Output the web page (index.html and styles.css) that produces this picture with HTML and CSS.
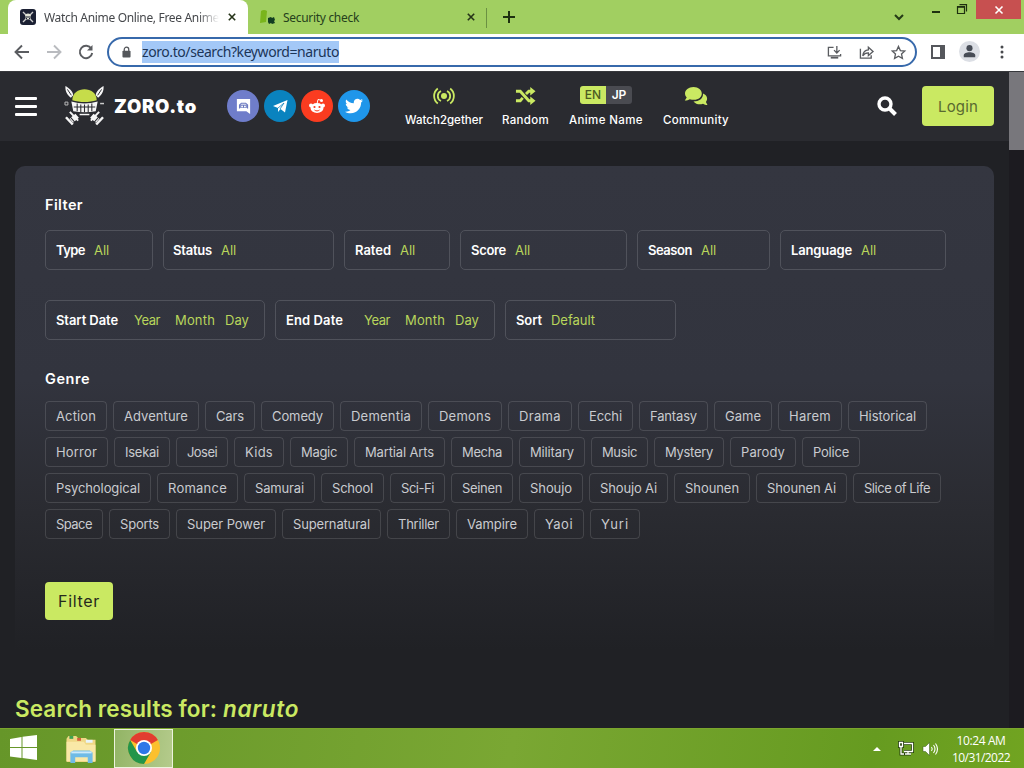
FILE: index.html
```
<!DOCTYPE html>
<html lang="en">
<head>
    <meta charset="UTF-8">
    <meta name="viewport" content="width=device-width, initial-scale=1.0">
    <title>Watch Anime Online, Free Anime</title>
    <link rel="stylesheet" href="styles.css">
</head>
<body>
    <!-- Browser tabs -->
    <div class="tabbar">
        <div class="tab tab-active">
            <svg class="favicon" viewBox="0 0 16 16"><rect width="16" height="16" rx="3" fill="#1b2033"/><path d="M3 3l10 10M13 3L3 13" stroke="#ccc" stroke-width="1.4"/><circle cx="8" cy="7.5" r="3" fill="#e3e6d8"/><path d="M5 8h6M6.5 10v-1M9.5 10v-1" stroke="#1b2033"/></svg>
            <span class="tab-title" data-w="175">Watch Anime Online, Free Anime</span>
            <svg class="tab-close" viewBox="0 0 10 10"><path d="M1 1l8 8M9 1L1 9"/></svg>
        </div>
        <div class="tab">
            <svg class="favicon" viewBox="0 0 16 16"><path d="M1 2q3-2 6 0L6 13l-6 1z" fill="#79b51c"/><path d="M8 9l3-1 1 1 2-1 1 3-1 1 1 2-3 1-1-1-2 1-1-2z" fill="#123d22"/></svg>
            <span class="tab-title" data-w="76">Security check</span>
            <svg class="tab-close" viewBox="0 0 10 10"><path d="M1 1l8 8M9 1L1 9"/></svg>
        </div>
        <span class="tab-sep"></span>
        <svg class="new-tab" viewBox="0 0 12 12"><path d="M6 0v12M0 6h12"/></svg>
        <svg class="tab-search" viewBox="0 0 10 6"><path d="M1 1l4 4 4-4"/></svg>
        <div class="window-buttons">
            <svg class="win-min" viewBox="0 0 8 2"><path d="M0 1h8" stroke="#1e3010" stroke-width="2"/></svg>
            <svg class="win-max" viewBox="0 0 10 10"><path d="M.5 2.8h7v6.7h-7zM2.5 .6h7v6.900" fill="none" stroke="#1e3010" stroke-width="1.2"/><path d="M0 2.8h8" stroke="#1e3010" stroke-width="1.6"/></svg>
            <div class="win-close"><svg viewBox="0 0 8 8"><path d="M.5.5l7 7M7.5.5l-7 7" stroke="#fff" stroke-width="1.6"/></svg></div>
        </div>
    </div>

    <!-- Address bar -->
    <div class="toolbar">
        <svg class="nav-icon" viewBox="0 0 16 16"><path d="M15 8H2M8 1.5L1.5 8 8 14.5"/></svg>
        <svg class="nav-icon nav-off" viewBox="0 0 16 16"><path d="M1 8h13M8 1.5L14.5 8 8 14.5"/></svg>
        <svg class="nav-icon" viewBox="0 0 16 16"><path d="M13.3 4.600A6.200 6.200 0 1 0 14.200 9"/><path d="M14.5 1v5.500H9z" fill="#5a5c60" stroke="none"/></svg>
        <div class="omnibox">
            <svg class="lock" viewBox="0 0 10 12"><path d="M2.5 5V3.200a2.500 2.500 0 0 1 5 0V5" fill="none" stroke="#54565a" stroke-width="1.4"/><rect x=".5" y="4.500" width="9" height="7.500" rx="1" fill="#54565a"/></svg>
            <span class="url"><span data-w="197">zoro.to/search?keyword=naruto</span></span>
            <svg class="omni-icon" viewBox="0 0 16 16"><path d="M7 2.500H1.500v9H14.500V9.500M10.500 1v7M7.500 5.500l3 3 3-3"/><path d="M4 13.500h8" stroke-width="2"/></svg>
            <svg class="omni-icon" viewBox="0 0 16 16"><path d="M1.500 4v10h11.500v-3M4 11.500c.5-4 2.500-6 6-6.200V2.500L15 7l-5 4.300V8.500C7.500 8.400 5.500 9.300 4 11.500z"/></svg>
            <svg class="omni-icon" viewBox="0 0 16 16"><path d="M8 1.500l2 4.400 4.700.5-3.500 3.200 1 4.700L8 11.900l-4.200 2.400 1-4.700L1.300 6.400l4.700-.5z"/></svg>
        </div>
        <svg class="side-panel" viewBox="0 0 14 14"><rect x="1" y="1" width="12" height="12" fill="none" stroke="#55575c" stroke-width="2"/><path d="M9 1h4v12H9z" fill="#55575c"/></svg>
        <svg class="avatar" viewBox="0 0 22 22"><circle cx="11" cy="11" r="11" fill="#dcdfe5"/><circle cx="11" cy="7.500" r="3.200" fill="#474c56"/><path d="M5 17v-2c0-2 3-3.200 6-3.200s6 1.200 6 3.200v2z" fill="#474c56"/></svg>
        <svg class="dots" viewBox="0 0 4 14"><circle cx="2" cy="2" r="1.500"/><circle cx="2" cy="7" r="1.500"/><circle cx="2" cy="12" r="1.500"/></svg>
    </div>

    <div class="viewport">
        <div class="page">
            <header class="header">
                <div class="burger"><i></i><i></i><i></i></div>
                <svg class="logo-skull" viewBox="0 0 42 42">
                    <!-- blades -->
                    <path d="M1.500 1C5 3 9 6 9.500 10.500L7 13C3 10 1 6 1.500 1zM40.500 1C37 3 33 6 32.500 10.500L35 13c4-3 6-7 5.500-12z" fill="#f6f6f6"/>
                    <path d="M3.500 4.500l4 6M38.500 4.500l-4 6" stroke="#2b2c31" stroke-width="1"/>
                    <!-- hilts -->
                    <path d="M13.500 31.500l-6 5M28.500 31.500l6 5" stroke="#f6f6f6" stroke-width="5.500"/>
                    <path d="M6 27.500l8.500 9M36 27.500l-8.500 9" stroke="#f6f6f6" stroke-width="2"/>
                    <path d="M2 33l7 7.500M40 33l-7 7.500" stroke="#f6f6f6" stroke-width="2.500"/>
                    <path d="M6 32.500l5 5.500M36 32.500l-5 5.500" stroke="#2b2c31" stroke-width="1.100"/>
                    <path d="M1 17.500h3v3H1z" fill="none" stroke="#bbb" stroke-width="1"/><path d="M37 19h4" stroke="#ccc" stroke-width="1.500"/>
                    <!-- teeth -->
                    <path d="M7.500 17q13.500 4 27 0l-2 10q-11.500 2-23 0z" fill="#f6f6f6"/>
                    <path d="M10 22.500h22M13.500 19v8M17.200 20v8M21 20v8M24.800 20v8M28.500 19v8" stroke="#2b2c31" stroke-width="1.100"/>
                    <path d="M16 29.500h10v1.500H16z" fill="#f6f6f6"/>
                    <path d="M8.500 15.500C8.500 .5 33.500 .5 33.500 15.500c-8 2.500-17 2.500-25 0z" fill="#c6dc4a"/>
                </svg>
                <span class="logo-text"><span data-w="83">ZORO.to</span></span>
                <div class="socials">
                    <a class="social discord"><svg viewBox="0 0 18 18"><path d="M2 1h14v16l-4-3H2z" fill="#fff"/><path d="M4.800 11V7.500L6.800 5.500h4.500l2 2V11" fill="none" stroke="#6b79c0" stroke-width="1.2"/><path d="M5.500 7h7v3.500h-7z" fill="#6b79c0"/><circle cx="7.500" cy="9" r="1" fill="#fff"/><circle cx="10.500" cy="9" r="1" fill="#fff"/></svg></a>
                    <a class="social telegram"><svg viewBox="0 0 18 18"><path d="M2 9L16.500 3 14 15.500 9.500 12 7 15v-4z" fill="#fff"/><path d="M7 11l6-5-4 6" fill="none" stroke="#0c83bb" stroke-width=".8"/></svg></a>
                    <a class="social reddit"><svg viewBox="0 0 18 18"><path d="M9 7l1-4.500 3 .7" fill="none" stroke="#fff"/><circle cx="13.500" cy="3.500" r="1.500" fill="#fff"/><circle cx="3" cy="8.500" r="2" fill="#fff"/><circle cx="15" cy="8.500" r="2" fill="#fff"/><ellipse cx="9" cy="11" rx="6.500" ry="5" fill="#fff"/><circle cx="6.500" cy="10" r="1.100" fill="#f83d20"/><circle cx="11.500" cy="10" r="1.100" fill="#f83d20"/><path d="M6.500 13c1.500 1.200 3.500 1.200 5 0" fill="none" stroke="#f83d20"/></svg></a>
                    <a class="social twitter"><svg viewBox="0 0 512 512"><path fill="#fff" d="M459 152c.3 4 .3 9 .3 13.600C459.300 304 354 464 161 464c-59 0-114-17-161-47 8 1 16 1.300 25 1.300 49 0 94-17 130-45-46-1-85-31-98-73 7 1 13 1.600 20 1.600 9 0 19-1.300 28-3.600-48-10-84-52-84-103v-1c14 8 30 13 47 13.600-28-19-47-51-47-87 0-19 5-37 14-53 52 64 130 106 217 110-2-8-3-16-3-24 0-58 47-105 105-105 30 0 57 13 77 33 24-5 46-13 66-25-8 24-24 45-46 58 21-2 42-8 60-16-14 21-32 39-52 54z"/></svg></a>
                </div>
                <nav class="menu">
                    <a class="menu-item w2g"><svg viewBox="0 0 20 18"><circle cx="10" cy="9" r="3" fill="#cae962"/><path d="M7 4a5.500 5.500 0 0 0 0 10M13 4a5.500 5.500 0 0 1 0 10M3.800 1.500a9.500 9.500 0 0 0 0 15M16.200 1.500a9.500 9.500 0 0 1 0 15" fill="none" stroke="#cae962" stroke-width="1.8"/></svg><span data-w="78">Watch2gether</span></a>
                    <a class="menu-item random"><svg viewBox="0 0 22 18"><path d="M1 4h4.500l9 10H17M1 14h4.500l2.600-3M11.500 7l3-3H17" fill="none" stroke="#cae962" stroke-width="3"/><path d="M16 -.5l5.500 4.500-5.500 4.500zM16 9.500l5.500 4.500-5.500 4.500z" fill="#cae962"/></svg><span data-w="47">Random</span></a>
                    <a class="menu-item name"><div class="lang"><b class="en">EN</b><b class="jp">JP</b></div><span data-w="74">Anime Name</span></a>
                    <a class="menu-item community"><svg viewBox="0 0 24 20"><path d="M9.500 1C4.500 1 1 4 1 7.500c0 1.500.7 2.900 1.700 4L.8 14.500c2 0 3.800-.5 5-1.300 7 2 12-1.200 12-5.700C17.800 4 14.500 1 9.500 1z" fill="#cae962"/><path d="M19 7.500c.4 5-4 8-9.500 8 2.500 3 6.500 3.300 9.500 2.200 1.200.8 2.800 1.300 4.500 1.300l-1.600-3c2.500-3 1.100-7-2.900-8.500z" fill="#cae962"/></svg><span data-w="66">Community</span></a>
                </nav>
                <svg class="search" viewBox="0 0 20 20"><circle cx="8" cy="8" r="6" fill="none" stroke="#fff" stroke-width="3.400"/><path d="M12.500 12.500l6 6" stroke="#fff" stroke-width="4"/></svg>
                <a class="login"><span data-w="40">Login</span></a>
            </header>

            <section class="filter">
                <h2><span data-w="38">Filter</span></h2>
                <div class="fields">
                    <div class="field f-type"><b data-w="29">Type</b><em>All</em></div>
                    <div class="field f-status"><b data-w="39">Status</b><em>All</em></div>
                    <div class="field f-rated"><b data-w="36">Rated</b><em>All</em></div>
                    <div class="field f-score"><b data-w="35">Score</b><em>All</em></div>
                    <div class="field f-season"><b data-w="44">Season</b><em>All</em></div>
                    <div class="field f-language"><b data-w="61">Language</b><em>All</em></div>
                </div>
                <div class="fields">
                    <div class="field f-date"><b data-w="62">Start Date</b><em class="year" data-w="26">Year</em><em class="month" data-w="40">Month</em><em data-w="24">Day</em></div>
                    <div class="field f-date"><b data-w="57">End Date</b><em class="year year-end" data-w="26">Year</em><em class="month" data-w="40">Month</em><em data-w="24">Day</em></div>
                    <div class="field f-sort"><b data-w="26">Sort</b><em data-w="44">Default</em></div>
                </div>
                <h2 class="genre-title"><span data-w="45">Genre</span></h2>
                <div id="genres" class="genres"></div>
                <a class="apply"><span data-w="42">Filter</span></a>
            </section>

            <h1><span data-w="202">Search results for:</span><i data-w="76">naruto</i></h1>
        </div>
        <div class="scrollbar"><div class="thumb"></div></div>
    </div>

    <!-- Taskbar -->
    <div class="taskbar">
        <svg class="start" viewBox="0 0 27 25"><path d="M0 4l11.500-2v10H0zM12.500 1.800L27 0v12H12.500zM0 13h11.500v10L0 21.500zM12.500 13H27v12l-14.500-2z" fill="#fff"/></svg>
        <svg class="explorer" viewBox="0 0 32 30">
            <path d="M1 4l2-3h8l2 2h8l2 2h8v23H1z" fill="#efd886"/><path d="M4 1h4v3H4z" fill="#3fa251"/><path d="M12 3h4v3h-4z" fill="#d5613f"/><path d="M21 5h7v3h-7z" fill="#e8f4fa"/>
            <path d="M1 7h18l2 3h10v17H1z" fill="#f9e8a7"/><path d="M5 29V18l3-2h17l3 2v11h-5v-6H10v6z" fill="#6fbbe6"/><path d="M6 18h21" stroke="#cdeafa" stroke-width="2"/>
        </svg>
        <div class="task-active">
            <svg class="chrome" viewBox="0 0 32 32"><circle cx="16" cy="16" r="16" fill="#fbc02e"/><path d="M16 16L2.140 8A16 16 0 0 1 29.860 8z" fill="#e23d30"/><path d="M2.140 8A16 16 0 0 0 16 32l6.930-12L16 16l-6.930 4z" fill="#23954a"/><circle cx="16" cy="16" r="8" fill="#fff"/><circle cx="16" cy="16" r="6.200" fill="#2e77e8"/></svg>
        </div>
        <div class="tray">
            <svg class="tray-up" viewBox="0 0 8 4"><path d="M4 0l4 4H0z" fill="#fff"/></svg>
            <svg class="network" viewBox="0 0 16 15"><g fill="none" stroke="#24400a" stroke-width="3"><path d="M5 2.500h9.500v8H6M1.500 1.500h3v4h-3zM3 6v7h10"/></g><g fill="none" stroke="#fff" stroke-width="1.3"><path d="M6 2.500h8.500v8H6M1.500 1.500h3v4h-3zM3 6v7h3M7 13h6M10 11v2"/></g></svg>
            <svg class="sound" viewBox="0 0 16 14"><path d="M1 4.500h2.500L7.500 .5v13l-4-4H1z" fill="#fff" stroke="#35551a" stroke-width=".5"/><path d="M9.500 5q1.500 2 0 4M11.500 3q3 4 0 8M13.500 1.500q4 5.500 0 11" fill="none" stroke="#fff" stroke-width="1.1"/></svg>
            <div class="clock"><span data-w="49">10:24 AM</span><span data-w="58">10/31/2022</span></div>
        </div>
    </div>

    <script src="script.js"></script>
</body>
</html>
```
FILE: styles.css
```
body {
    margin: 0;
    width: 1024px;
    height: 768px;
    overflow: hidden;
    background: #202125;
    color: #fff;
    font-family: Inter, "Open Sans", sans-serif;
    font-size: 13px;
    display: flex;
    flex-direction: column;
}
* { box-sizing: border-box; }
svg { display: block; flex: none; overflow: visible; }
[data-w] { display: inline-block; white-space: nowrap; }

/* Tabs */
.tabbar {
    height: 34px;
    flex: none;
    display: flex;
    background: #a1cf61;
    color: #25401c;
    font-family: "Noto Sans", sans-serif;
    font-size: 12px;
}
.tab {
    height: 34px;
    width: 238px;
    padding: 0 11px 0 12px;
    display: flex;
    align-items: center;
}
.tab-active {
    width: 240px;
    margin-left: 8px;
    background: #fff;
    border-radius: 8px 8px 0 0;
    color: #45474b;
}
.tab-active .tab-title {
    -webkit-mask-image: linear-gradient(90deg, #000 88%, transparent);
    mask-image: linear-gradient(90deg, #000 88%, transparent);
}
.favicon { width: 16px; height: 16px; margin-right: 8px; }
.tab:not(.tab-active) .favicon { margin-right: 7px; }
.tab-close { width: 8px; height: 8px; margin-left: auto; fill: none; stroke: #253318; stroke-width: 2; }
.tab-active .tab-close { margin-right: 1px; }
.tab-sep { width: 1px; height: 20px; margin-top: 8px; background: #6b9142; }
.new-tab { width: 12px; height: 12px; margin: 11px 0 0 16px; stroke: #1e3010; stroke-width: 2; }
.tab-search { width: 10px; height: 6px; margin: 14px 0 0 379px; fill: none; stroke: #253b17; stroke-width: 2; }
.window-buttons { display: flex; margin-left: auto; padding-right: 3px; }
.win-min { width: 8px; height: 2px; margin: 11px 17px 0 0; }
.win-max { width: 10px; height: 10px; margin: 4px 9px 0 0; }
.win-close { width: 45px; height: 19px; background: #c75050; display: flex; align-items: center; justify-content: center; }
.win-close svg { width: 8px; height: 8px; }

/* Address bar */
.toolbar {
    height: 37px;
    flex: none;
    background: #fff;
    display: flex;
    align-items: center;
    padding: 0 20px 2px 14px;
}
.nav-icon { width: 16px; height: 16px; margin-right: 16px; fill: none; stroke: #5a5c60; stroke-width: 1.9; }
.nav-icon.nav-off { stroke: #b9bbbf; }
.nav-icon:nth-child(3) { margin-right: 13px; }
.omnibox {
    width: 810px;
    height: 30px;
    margin-top: 1px;
    border: 2px solid #3769ab;
    border-radius: 15px;
    display: flex;
    align-items: center;
    padding: 0 9px 0 13px;
}
.lock { width: 9px; height: 12px; margin-right: 11px; }
.url {
    height: 22px;
    line-height: 22px;
    background: #a3c8f7;
    color: #1c3558;
    font-family: "Noto Sans", sans-serif;
    font-size: 14px;
    margin-right: auto;
}
.omni-icon { width: 15px; height: 15px; margin-left: 17px; fill: none; stroke: #5a5c60; stroke-width: 1.4; }
.side-panel { width: 14px; height: 14px; margin-left: 14px; }
.avatar { width: 21px; height: 21px; margin-left: 14px; }
.dots { width: 4px; height: 14px; margin-left: auto; fill: #47494d; }

/* Site */
.viewport { height: 657px; flex: none; display: flex; border-top: 1px solid #37383c; }
.page { width: 1009px; }
.scrollbar { width: 15px; background: #1c1b20; }
.thumb { height: 78px; background: #78777c; }

.header {
    height: 69px;
    background: #2a2b30;
    display: flex;
    padding: 0 15px;
}
.burger { width: 22px; margin-top: 25px; display: flex; flex-direction: column; gap: 4px; }
.burger i { height: 3px; background: #fff; border-radius: 1px; }
.burger i + i { margin-top: 1px; }
.logo-skull { width: 41px; height: 41px; margin: 13px 0 0 27px; }
.logo-text { font-size: 18.500px; font-weight: 900; line-height: 24px; margin: 22px 0 0 9px; width: 85px; }
.socials { display: flex; gap: 5px; margin: 18px 0 0 28px; }
.social { width: 32px; height: 32px; border-radius: 50%; display: flex; align-items: center; justify-content: center; }
.social svg { width: 18px; height: 18px; }
.social.discord svg { width: 17px; height: 17px; }
.discord { background: #6f7dca; }
.telegram { background: #0a83bf; }
.reddit { background: #fa3c20; }
.twitter { background: #1f96ea; }
.menu { display: flex; gap: 20px; margin-left: 35px; font-size: 11.500px; font-weight: 500; }
.menu-item { height: 60px; display: flex; flex-direction: column; align-items: center; padding-top: 14px; }
.menu-item + .menu-item { position: relative; left: -1px; }
.menu-item > span { line-height: 16px; margin-top: auto; margin-bottom: 4px; }
.w2g svg { width: 20px; height: 18px; margin-top: 1px; }
.random svg { width: 21px; height: 18px; margin-top: 1px; }
.community svg { width: 24px; height: 20px; }
.lang { display: flex; width: 52px; height: 18px; border-radius: 3px; overflow: hidden; line-height: 18px; font-size: 12px; text-align: center; }
.lang b { width: 26px; font-weight: 600; }
.lang .en { background: #cae962; color: #4c5a22; font-weight: 500; }
.jp { background: #4a4b51; }
.search { width: 20px; height: 20px; margin: 24px 25px 0 auto; }
.login { width: 72px; height: 40px; margin-top: 14px; border-radius: 4px; background: #cae962; color: #596930; font-size: 15px; line-height: 42px; text-align: center; }

/* Filter box */
.filter {
    width: 979px;
    height: 510px;
    margin: 25px 0 0 15px;
    padding: 29px 30px 0;
    border-radius: 10px;
    background: linear-gradient(#343640, #32343e 42%, #2a2b31 68%, #202125 95%);
}
h2 { margin: 0; font-size: 14.500px; line-height: 20px; font-weight: 600; }
.fields { display: flex; gap: 10px; margin-top: 15px; }
.fields + .fields { margin-top: 30px; }
.field { height: 40px; border: 1px solid #50525b; border-radius: 5px; padding: 0 10px; display: flex; align-items: center; line-height: 38px; font-size: 13px; }
.field b { font-weight: 600; margin-right: 9px; }
.field em { font-style: normal; font-weight: 400; color: #b9d65b; }
.f-type { width: 108px; }
.f-status { width: 171px; padding-left: 9px; }
.f-rated { width: 106px; }
.f-score { width: 167px; }
.f-season { width: 133px; }
.f-language { width: 166px; }
.f-date { width: 220px; }
.f-sort { width: 171px; }
.field .year { margin: 0 15px 0 7px; }
.field .year-end { margin-left: 12px; }
.field .month { margin-right: 10px; }
.genre-title { margin-top: 29px; }
.genres { display: flex; flex-direction: column; gap: 6px; margin-top: 12px; }
.genre-row { display: flex; gap: 6px; }
.genre { height: 30px; line-height: 28px; padding: 0 10px; border: 1px solid rgba(255,255,255,0.13); border-radius: 4px; color: #c9cbcf; font-size: 13px; }
.apply { display: block; width: 68px; height: 38px; margin-top: 43px; border-radius: 4px; background: #cae962; color: #26291d; font-size: 16px; line-height: 38px; text-align: center; }

h1 { margin: 17px 0 0 15px; font-size: 22.500px; line-height: 32px; font-weight: 600; color: #cae962; display: flex; }
h1 i { margin-left: 6px; }

/* Taskbar */
.taskbar { height: 40px; flex: none; display: flex; background: linear-gradient(100deg, #669629, #7aa733 50%, #669b20 85%, #71a421); border-top: 1px solid #7ba52d; }
.start { width: 27px; height: 25px; margin: 6px 0 0 10px; }
.explorer { width: 32px; height: 29px; margin: 6px 0 0 28px; }
.task-active { width: 59px; height: 39px; margin-left: 17px; border: 1px solid #edf3de; background: linear-gradient(100deg, #92b465, #b5cb8c); display: flex; justify-content: center; padding-top: 2px; }
.chrome { width: 32px; height: 32px; }
.tray { margin-left: auto; display: flex; padding-right: 14px; }
.tray-up { width: 8px; height: 4px; margin: 18px 17px 0 0; }
.network { width: 16px; height: 15px; margin: 12px 8px 0 0; }
.sound { width: 16px; height: 14px; margin: 13px 14px 0 0; }
.tray-up, .network, .sound, .clock { flex: none; }
.clock { display: flex; flex-direction: column; align-items: center; width: 58px; padding-top: 3px; font-family: "Open Sans", sans-serif; font-size: 12px; line-height: 17px; }
```
FILE: script.js
```
// genre name and label width
const genres = [
    [["Action", 62], ["Adventure", 86], ["Cars", 50], ["Comedy", 73], ["Dementia", 82], ["Demons", 74], ["Drama", 64], ["Ecchi", 55], ["Fantasy", 69], ["Game", 58], ["Harem", 64], ["Historical", 79]],
    [["Horror", 63], ["Isekai", 56], ["Josei", 52], ["Kids", 50], ["Magic", 58], ["Martial Arts", 91], ["Mecha", 62], ["Military", 66], ["Music", 57], ["Mystery", 70], ["Parody", 66], ["Police", 58]],
    [["Psychological", 106], ["Romance", 81], ["Samurai", 71], ["School", 63], ["Sci-Fi", 55], ["Seinen", 62], ["Shoujo", 64], ["Shoujo Ai", 79], ["Shounen", 76], ["Shounen Ai", 91], ["Slice of Life", 88]],
    [["Space", 58], ["Sports", 61], ["Super Power", 100], ["Supernatural", 99], ["Thriller", 63], ["Vampire", 72], ["Yaoi", 50], ["Yuri", 50]]
];

function populateGenres() {
    const box = document.getElementById('genres');
    genres.forEach(list => {
        const row = document.createElement('div');
        row.className = 'genre-row';
        list.forEach(([name, width]) => {
            const tag = document.createElement('a');
            tag.className = 'genre';
            const label = document.createElement('span');
            label.textContent = name;
            label.dataset.w = width - 22;
            tag.appendChild(label);
            row.appendChild(tag);
        });
        box.appendChild(row);
    });
}

// Track each label out to its width
function fitLabels() {
    document.querySelectorAll('[data-w]').forEach(el => {
        const target = Number(el.dataset.w);
        const natural = el.getBoundingClientRect().width;
        el.style.letterSpacing = (target - natural) / el.textContent.length + 'px';
        el.style.width = target + 'px';
    });
}

populateGenres();
fitLabels();
```
